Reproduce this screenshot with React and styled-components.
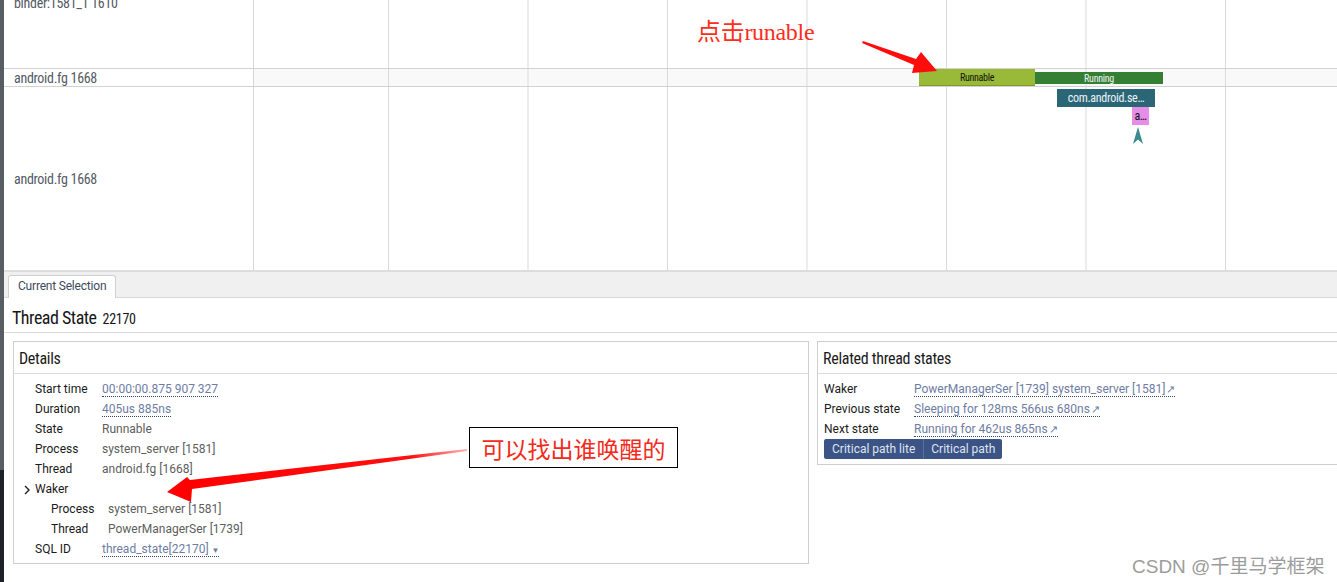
import React from 'react';
import styled, { createGlobalStyle } from 'styled-components';

const GlobalStyle = createGlobalStyle`
	html, body {
		margin: 0;
		padding: 0;
		background: #ffffff;
		font-family: Roboto, "Noto Sans", sans-serif;
	}
	* { box-sizing: border-box; }
`;

const Page = styled.div`
	position: relative;
	display: flex;
	width: 1337px;
	height: 582px;
	overflow: hidden;
	background: #fff;
`;

const Strip = styled.div`
	width: 4px;
	flex: none;
	background: linear-gradient(to bottom, #585c63 0 470px, #1d2127 470px);
`;

const Main = styled.div`
	flex: 1;
	display: flex;
	flex-direction: column;
	min-width: 0;
`;

const Timeline = styled.div`
	height: 270px;
	flex: none;
	overflow: hidden;
`;

const Row = styled.div`
	display: flex;
	height: ${p => p.h}px;
	margin-top: ${p => p.offset || 0}px;
	border-bottom: ${p => (p.last ? 'none' : '1px solid #d2d2d2')};
`;

const Label = styled.div`
	width: 250px;
	flex: none;
	display: flex;
	align-items: center;
	padding-left: 10px;
	border-right: 1px solid #d6d6d6;
	color: #555b66;
	font-size: 14px;
	font-stretch: condensed;
	letter-spacing: -0.3px;
	white-space: nowrap;
`;

const Track = styled.div`
	position: relative;
	flex: 1;
	background-color: ${p => p.bg || '#fff'};
	background-image: linear-gradient(90deg, #dadada 0 1px, transparent 1px);
	background-size: 139.5px 100%;
	background-position: 134px 0;
	background-repeat: repeat-x;
`;

const Slice = styled.div`
	position: absolute;
	display: flex;
	align-items: center;
	justify-content: center;
	overflow: hidden;
	white-space: nowrap;
	background: ${p => p.color};
	color: ${p => p.text};
	font-size: ${p => p.fs}px;
	font-stretch: condensed;
	letter-spacing: -0.3px;
	border-bottom: ${p => (p.edge ? `1px solid ${p.edge}` : 'none')};
`;

const Marker = styled.svg`
	position: absolute;
`;

const TabBar = styled.div`
	display: flex;
	align-items: flex-end;
	height: 28px;
	flex: none;
	padding-left: 4px;
	background: #f0f0f0;
	border-top: 2px solid #dcdcdc;
	box-shadow: inset 0 -1px 0 #d8d8d8;
`;

const Tab = styled.div`
	height: 23px;
	padding: 3px 9px 0;
	background: #fff;
	border: 1px solid #d0d0d0;
	border-bottom: none;
	border-radius: 3px 3px 0 0;
	color: #3e4a5e;
	font-size: 12px;
	letter-spacing: -0.2px;
`;

const Content = styled.div`
	flex: 1;
	background: #fff;
`;

const Heading = styled.div`
	display: flex;
	align-items: baseline;
	gap: 6px;
	height: 35px;
	padding: 9px 0 0 8px;
	border-bottom: 1px solid #dadada;
	color: #161616;
`;

const HeadingTitle = styled.span`
	font-size: 18px;
	font-stretch: condensed;
	letter-spacing: -0.5px;
`;

const HeadingId = styled.span`
	font-size: 14px;
	font-stretch: condensed;
	letter-spacing: -0.3px;
`;

const Panels = styled.div`
	display: flex;
	gap: 8px;
	padding: 8px 0 0 9px;
	align-items: flex-start;
`;

const Panel = styled.div`
	width: ${p => p.w}px;
	flex: none;
	border: 1px solid #cfcfcf;
	padding-bottom: ${p => p.pb}px;
`;

const PanelHeader = styled.div`
	height: 32px;
	display: flex;
	align-items: center;
	padding: 1px 0 0 5px;
	border-bottom: 1px solid #dcdcdc;
	color: #1a1a1a;
	font-size: 16px;
	font-stretch: condensed;
	letter-spacing: -0.3px;
`;

const Rows = styled.div`
	display: grid;
	grid-template-columns: ${p => p.cols};
	grid-auto-rows: 20px;
	align-items: center;
	padding: 5px 0 0 ${p => p.pl}px;
	font-size: 12px;
	white-space: nowrap;
`;

const Key = styled.div`
	position: relative;
	color: #1b1b1b;
`;

const Value = styled.div`
	color: #5e5e5e;
`;

const Link = styled.span`
	color: #6e7da4;
	border-bottom: 1px dotted #34456b;
`;

const Chevron = styled.svg`
	position: absolute;
	left: -12px;
	top: 3px;
`;

const Group = styled.div`
	grid-column: 1 / -1;
	grid-row: span ${p => p.rows};
	display: grid;
	grid-template-columns: 57px auto;
	grid-auto-rows: 20px;
	align-items: center;
	padding-left: 16px;
`;

const Buttons = styled.div`
	display: flex;
	padding-left: 6px;
`;

const Button = styled.div`
	height: 20px;
	display: flex;
	align-items: center;
	padding: 0 ${p => p.px}px;
	background: #3c5386;
	color: #dfe4ee;
	font-size: 12px;
	border-left: ${p => (p.sep ? '1px solid #5a6f9c' : 'none')};
	border-radius: ${p => p.radius};
`;

const ArrowMark = styled.span`
	font-size: 11px;
	margin-left: 1px;
`;

const Overlay = styled.svg`
	position: absolute;
	left: 0;
	top: 0;
	pointer-events: none;
`;

const Note = styled.div`
	position: absolute;
	left: ${p => p.x}px;
	top: ${p => p.y}px;
	color: #ff2d1c;
	white-space: nowrap;
`;

const ClickNote = styled(Note)`
	font-family: "Liberation Serif", "Noto Sans CJK SC", serif;
	font-size: 24px;
	letter-spacing: -0.3px;
`;

const BoxNote = styled(Note)`
	width: 209px;
	height: 41px;
	display: flex;
	align-items: center;
	justify-content: center;
	background: #fff;
	border: 1px solid #000;
	font-family: "Noto Sans CJK SC", sans-serif;
	font-size: 23px;
	color: #f42a1a;
`;

const Watermark = styled(Note)`
	font-family: "Liberation Sans", "Noto Sans CJK SC", sans-serif;
	font-size: 19px;
	color: #9c9c9c;
`;

const Ext = () => <ArrowMark>↗</ArrowMark>;

export default function App() {
	return (
		<Page>
			<GlobalStyle />
			<Strip />
			<Main>
				<Timeline>
					<Row h={131} offset={-62}>
						<Label>binder:1581_1 1610</Label>
						<Track />
					</Row>
					<Row h={18}>
						<Label>android.fg 1668</Label>
						<Track bg="#f9f9f9">
							<Slice color="#99b938" text="#111" fs={10} edge="#7e9b2c" style={{ left: 665, top: 0, width: 116, height: 17 }}>
								Runnable
							</Slice>
							<Slice color="#347f33" text="#f2f2f2" fs={10} style={{ left: 781, top: 3, width: 128, height: 12 }}>
								Running
							</Slice>
						</Track>
					</Row>
					<Row h={183} last>
						<Label>android.fg 1668</Label>
						<Track>
							<Slice color="#2b6677" text="#eef3f5" fs={12} style={{ left: 803, top: 2, width: 98, height: 18 }}>
								com.android.se…
							</Slice>
							<Slice color="#e68de8" text="#111" fs={12} style={{ left: 878, top: 20, width: 17, height: 18 }}>
								a…
							</Slice>
							<Marker width="10" height="17" viewBox="0 0 10 17" style={{ left: 879, top: 40 }}>
								<path d="M5 0 L10 17 L5 12.5 L0 17 Z" fill="#3a8c8c" />
							</Marker>
						</Track>
					</Row>
				</Timeline>
				<TabBar>
					<Tab>Current Selection</Tab>
				</TabBar>
				<Content>
					<Heading>
						<HeadingTitle>Thread State</HeadingTitle>
						<HeadingId>22170</HeadingId>
					</Heading>
					<Panels>
						<Panel w={796} pb={4}>
							<PanelHeader>Details</PanelHeader>
							<Rows cols="67px auto" pl={21}>
								<Key>Start time</Key>
								<Value><Link>00:00:00.875 907 327</Link></Value>
								<Key>Duration</Key>
								<Value><Link>405us 885ns</Link></Value>
								<Key>State</Key>
								<Value>Runnable</Value>
								<Key>Process</Key>
								<Value>system_server [1581]</Value>
								<Key>Thread</Key>
								<Value>android.fg [1668]</Value>
								<Key>
									<Chevron width="8" height="10" viewBox="0 0 8 10">
										<path d="M2 1 L6 5 L2 9" fill="none" stroke="#222" strokeWidth="1.4" />
									</Chevron>
									Waker
								</Key>
								<Value />
								<Group rows={2}>
									<Key>Process</Key>
									<Value>system_server [1581]</Value>
									<Key>Thread</Key>
									<Value>PowerManagerSer [1739]</Value>
								</Group>
								<Key>SQL ID</Key>
								<Value><Link>thread_state[22170] <span style={{ fontSize: 8 }}>▼</span></Link></Value>
							</Rows>
						</Panel>
						<Panel w={530} pb={5}>
							<PanelHeader>Related thread states</PanelHeader>
							<Rows cols="90px auto" pl={6}>
								<Key>Waker</Key>
								<Value><Link>PowerManagerSer [1739] system_server [1581]<Ext /></Link></Value>
								<Key>Previous state</Key>
								<Value><Link>Sleeping for 128ms 566us 680ns<Ext /></Link></Value>
								<Key>Next state</Key>
								<Value><Link>Running for 462us 865ns<Ext /></Link></Value>
							</Rows>
							<Buttons>
								<Button px={8} radius="2px 0 0 2px">Critical path lite</Button>
								<Button px={7} sep radius="0 2px 2px 0">Critical path</Button>
							</Buttons>
						</Panel>
					</Panels>
				</Content>
			</Main>

			<ClickNote x={697} y={12}>点击runable</ClickNote>
			<BoxNote x={469} y={427}>可以找出谁唤醒的</BoxNote>
			<Watermark x={1132} y={551}>CSDN @千里马学框架</Watermark>

			<Overlay width="1337" height="582" viewBox="0 0 1337 582">
				<defs>
					<linearGradient id="fade" x1="467" y1="450" x2="190" y2="490" gradientUnits="userSpaceOnUse">
						<stop offset="0" stopColor="#ffb4b4" />
						<stop offset="0.2" stopColor="#ff1010" />
						<stop offset="1" stopColor="#ff0000" />
					</linearGradient>
				</defs>
				<polygon points="863,41 916,59 921,52 937,71 912,73 914,65 862,43" fill="#ff0d0d" />
				<polygon points="467,449 190,480 187,477 167,492 191,502 192,489 467,451" fill="url(#fade)" />
			</Overlay>
		</Page>
	);
}
